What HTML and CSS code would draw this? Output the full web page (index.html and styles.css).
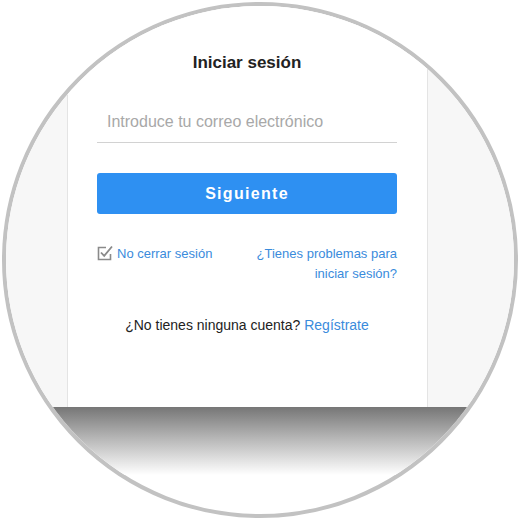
FILE: index.html
```html
<!DOCTYPE html>
<html lang="es">
<head>
  <meta charset="UTF-8">
  <meta name="viewport" content="width=device-width, initial-scale=1.0">
  <title>Iniciar sesión</title>
  <link rel="stylesheet" href="styles.css">
</head>
<body>
  <div class="lens">
    <div class="desk">
      <main class="login-card">
        <h2 class="login-title">Iniciar sesión</h2>
        <form class="login-form">
          <input class="login-input" type="email" name="email" placeholder="Introduce tu correo electrónico">
          <button class="login-btn" type="submit">Siguiente</button>
          <div class="login-options">
            <label class="keep-session">
              <svg class="check-icon" width="16" height="16" viewBox="0 0 16 16" aria-hidden="true">
                <path d="M9 2.5H1.5v12h12V9" fill="none" stroke="#8a8a8a" stroke-width="1.6"/>
                <path d="M4 7.5l3.2 3.4L15 1.5" fill="none" stroke="#8a8a8a" stroke-width="1.8"/>
              </svg>
              <span>No cerrar sesión</span>
            </label>
            <a class="help-link" href="#">¿Tienes problemas para<br>iniciar sesión?</a>
          </div>
        </form>
        <p class="signup">¿No tienes ninguna cuenta? <a href="#">Regístrate</a></p>
      </main>
    </div>
    <div class="shade"></div>
  </div>
</body>
</html>
```

FILE: styles.css
```css
:root {
  --main-font: "Liberation Sans", Arial, sans-serif;
  --text-color: #222222;
  --link-color: #3a8bdc;
  --btn-color: #2e90f2;
  --ring-color: #c2c2c2;
  --desk-color: #f7f7f7;
}

html {
  box-sizing: border-box;
  font-family: var(--main-font);
}

*,
*::before,
*::after {
  box-sizing: inherit;
}

body {
  margin: 0;
  width: 520px;
  height: 520px;
  background-color: #ffffff;
  padding: 2px;
}

.lens {
  width: 516px;
  height: 516px;
  border: 4px solid var(--ring-color);
  border-radius: 50%;
  overflow: hidden;
  background-color: #ffffff;
}

.desk {
  height: 401px;
  padding-left: 61px;
  background-color: var(--desk-color);
}

.shade {
  height: 68px;
  background: linear-gradient(#767676, #b5b5b5 45%, #ffffff);
}

.login-card {
  width: 361px;
  height: 100%;
  padding: 47px 30px 0 29px;
  background-color: #ffffff;
  border-left: 1px solid #e4e4e4;
  border-right: 1px solid #e4e4e4;
}

.login-title {
  margin: 0;
  font-size: 17px;
  line-height: 20px;
  text-align: center;
  color: var(--text-color);
}

.login-form {
  display: flex;
  flex-direction: column;
  margin-top: 29px;
}

.login-input {
  height: 41px;
  padding: 0 10px;
  border: none;
  border-bottom: 1px solid #d2d2d2;
  font-family: var(--main-font);
  font-size: 16px;
  color: var(--text-color);
  outline: none;
}

.login-input::placeholder {
  color: #a8a8a8;
}

.login-btn {
  height: 41px;
  margin-top: 30px;
  border: none;
  border-radius: 3px;
  background-color: var(--btn-color);
  color: #ffffff;
  font-family: var(--main-font);
  font-size: 16px;
  font-weight: bold;
  letter-spacing: 1.3px;
  cursor: pointer;
}

.login-options {
  display: flex;
  justify-content: space-between;
  align-items: flex-start;
  margin-top: 30px;
  font-size: 13px;
  line-height: 20px;
}

.keep-session {
  display: flex;
  align-items: center;
  gap: 4px;
  color: var(--link-color);
  cursor: pointer;
}

.check-icon {
  margin-bottom: 2px;
}

.help-link {
  text-align: right;
  color: var(--link-color);
  text-decoration: none;
}

.signup {
  margin: 31px 0 0;
  font-size: 14px;
  line-height: 20px;
  text-align: center;
  color: var(--text-color);
}

.signup a {
  color: var(--link-color);
  text-decoration: none;
}
```
